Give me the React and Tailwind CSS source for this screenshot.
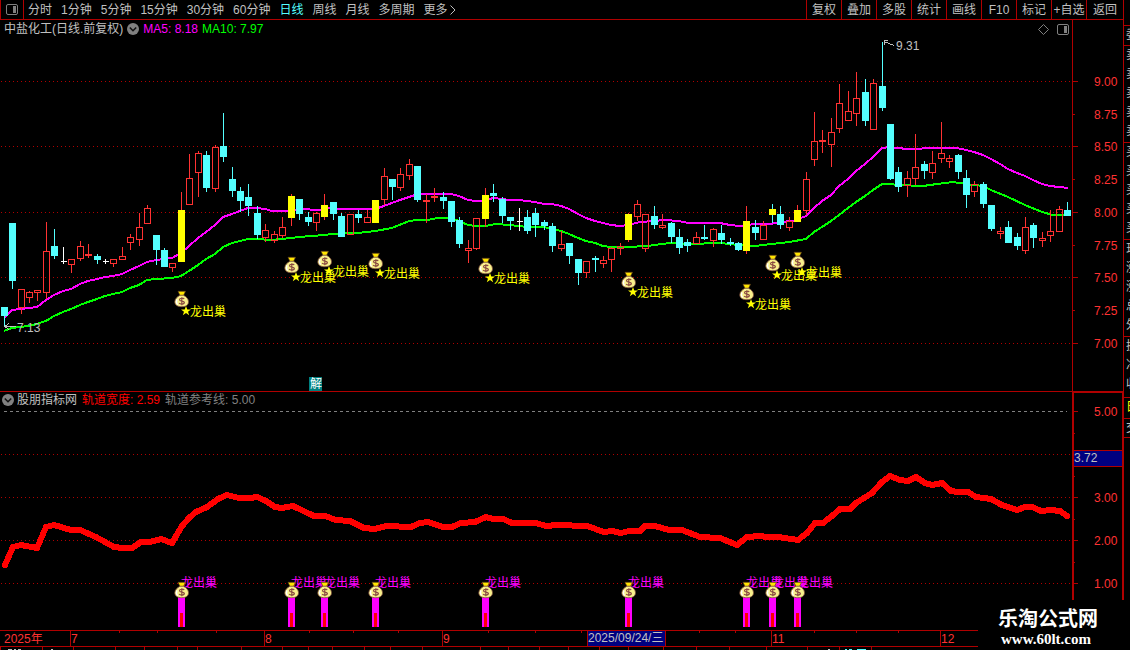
const periods = ['分时', '1分钟', '5分钟', '15分钟', '30分钟', '60分钟', '日线', '周线', '月线', '多周期'];
const tools = ['复权', '叠加', '多股', '统计', '画线', 'F10', '标记', '+自选', '返回'];

// kind, high, body top, body bottom, low
// u = up, d = down, y = signal bar, x = doji
const candles = [
  ['d', 307, 307, 316, 327], ['d', 223, 223, 281, 289], ['u', 289, 289, 308, 314], ['u', 291, 292, 298, 303],
  ['u', 290, 290, 293, 301], ['u', 222, 251, 293, 299], ['d', 229, 246, 256, 259], ['x', 247, 261, 262, 264],
  ['u', 259, 259, 265, 273], ['u', 241, 246, 259, 261], ['u', 244, 254, 256, 258], ['d', 254, 256, 260, 264],
  ['x', 259, 261, 262, 264], ['u', 259, 259, 264, 267], ['u', 247, 256, 260, 260], ['u', 234, 237, 243, 250],
  ['u', 213, 227, 240, 246], ['u', 205, 208, 224, 224], ['d', 235, 235, 250, 265], ['d', 248, 250, 267, 267],
  ['u', 263, 263, 268, 272], ['y', 192, 210, 262, 262], ['u', 154, 178, 205, 205], ['u', 151, 153, 173, 197],
  ['d', 151, 155, 188, 192], ['u', 145, 147, 189, 192], ['d', 113, 146, 157, 162], ['d', 167, 179, 191, 197],
  ['d', 187, 191, 201, 212], ['d', 184, 197, 206, 216], ['d', 206, 213, 235, 239], ['u', 224, 230, 238, 242],
  ['u', 231, 234, 241, 243], ['u', 217, 227, 236, 238], ['y', 194, 196, 218, 226], ['d', 199, 199, 214, 220],
  ['d', 212, 217, 222, 226], ['u', 212, 213, 223, 231], ['y', 194, 205, 217, 220], ['d', 202, 202, 214, 220],
  ['d', 213, 216, 237, 237], ['u', 214, 214, 235, 235], ['d', 210, 214, 218, 223], ['u', 210, 217, 223, 223],
  ['y', 200, 200, 223, 223], ['u', 168, 176, 200, 205], ['d', 179, 179, 187, 200], ['u', 168, 174, 188, 191],
  ['u', 159, 164, 176, 180], ['d', 166, 166, 200, 202], ['u', 194, 200, 202, 223], ['u', 188, 196, 198, 202],
  ['d', 192, 197, 201, 209], ['d', 201, 201, 222, 227], ['d', 217, 220, 244, 248], ['u', 240, 248, 251, 263],
  ['u', 218, 218, 249, 250], ['y', 188, 195, 219, 227], ['d', 184, 193, 196, 202], ['d', 197, 199, 216, 223],
  ['d', 217, 217, 221, 230], ['x', 208, 221, 222, 231], ['d', 210, 217, 231, 234], ['d', 208, 213, 225, 237],
  ['d', 220, 222, 226, 230], ['d', 223, 226, 246, 252], ['u', 231, 244, 249, 251], ['d', 243, 243, 256, 264],
  ['d', 259, 259, 273, 285], ['u', 261, 261, 273, 278], ['d', 256, 258, 260, 272], ['u', 256, 260, 264, 268],
  ['u', 247, 248, 260, 272], ['u', 243, 246, 249, 255], ['y', 213, 214, 240, 242], ['u', 200, 204, 217, 221],
  ['u', 214, 214, 249, 252], ['d', 206, 216, 225, 229], ['u', 214, 225, 228, 229], ['d', 222, 223, 237, 243],
  ['d', 229, 237, 248, 254], ['d', 239, 242, 246, 252], ['u', 232, 237, 244, 244], ['d', 225, 237, 239, 240],
  ['u', 228, 229, 241, 247], ['d', 225, 233, 240, 244], ['d', 238, 242, 244, 246], ['d', 242, 243, 250, 251],
  ['y', 206, 221, 251, 254], ['d', 220, 227, 233, 240], ['u', 221, 225, 240, 240], ['y', 204, 209, 215, 223],
  ['d', 206, 214, 225, 229], ['u', 217, 221, 228, 231], ['y', 205, 210, 222, 222], ['u', 172, 179, 211, 215],
  ['u', 112, 141, 160, 166], ['u', 130, 140, 142, 153], ['u', 118, 132, 145, 167], ['u', 84, 103, 129, 133],
  ['u', 91, 111, 121, 121], ['u', 72, 98, 114, 126], ['d', 79, 92, 121, 126], ['u', 79, 83, 130, 130],
  ['d', 42, 86, 108, 111], ['d', 124, 124, 179, 180], ['d', 167, 172, 187, 192], ['u', 171, 178, 186, 197],
  ['u', 134, 167, 179, 185], ['d', 161, 164, 171, 179], ['u', 151, 163, 173, 179], ['u', 122, 153, 159, 163],
  ['u', 155, 158, 162, 168], ['d', 154, 155, 172, 179], ['d', 170, 178, 195, 208], ['u', 181, 184, 192, 197],
  ['d', 182, 184, 204, 208], ['d', 205, 205, 229, 231], ['u', 227, 231, 234, 239], ['d', 221, 227, 243, 243],
  ['d', 233, 237, 246, 250], ['u', 217, 227, 251, 254], ['d', 223, 225, 238, 248], ['u', 232, 238, 241, 247],
  ['u', 210, 231, 236, 242], ['u', 206, 209, 232, 232], ['d', 202, 210, 216, 216],
];

const ma5 =
  '4,318 12,310 21,309 37,307 46,300 54,295 63,291 71,289 80,284 88,281 97,279 105,277 113,276 122,274 130,270 139,266 147,262 156,260 164,259 172,258 181,253 189,246 198,238 206,232 215,225 223,217 232,214 240,211 248,208 257,208 265,209 272,211 287,211 299,209 320,210 331,208 342,209 375,209 384,206 392,203 400,200 409,197 418,194 451,194 459,196 468,200 476,201 485,201 493,198 502,199 510,200 519,200 527,201 535,202 544,204 552,204 561,206 569,209 578,214 586,218 595,221 603,223 611,225 620,226 628,225 640,222 654,221 665,220 679,221 688,223 720,223 730,225 740,226 747,225 755,224 770,224 780,222 793,221 806,216 814,208 822,201 831,195 839,186 848,179 856,171 865,164 873,157 882,148 890,147 898,148 907,149 937,148 957,148 966,150 974,152 983,155 991,159 1000,164 1008,169 1017,173 1025,176 1033,180 1042,184 1050,186 1059,187 1068,188';
const ma10 =
  '4,331 12,328 21,327 33,325 46,321 54,316 63,312 71,309 80,305 88,302 97,299 105,296 113,294 122,292 130,288 139,285 147,280 156,279 172,278 181,276 189,271 198,265 206,259 215,254 223,247 232,243 240,241 248,239 257,239 270,240 282,239 299,237 324,235 333,234 358,233 375,231 392,228 409,221 417,220 428,220 437,218 451,218 459,221 468,225 476,226 485,226 496,224 510,225 527,227 544,227 552,229 561,231 569,234 578,238 586,241 595,243 603,246 611,247 628,247 647,246 670,243 688,244 720,243 738,245 755,246 763,245 789,242 806,239 814,232 822,227 831,221 839,215 848,208 856,202 865,196 873,190 882,184 890,184 898,185 923,186 937,184 953,182 966,184 983,186 991,190 1008,197 1025,205 1042,212 1053,215 1068,215';
const trackWidth =
  '5,565 13,547 21,545 37,548 46,527 54,525 71,530 80,530 96,537 114,547 123,548 132,548 141,542 150,542 161,539 172,543 182,526 189,518 196,512 207,507 218,499 227,495 239,498 250,498 257,497 266,501 275,507 282,508 293,506 314,516 325,516 336,520 350,521 364,528 375,529 386,526 411,527 420,523 428,522 443,527 452,527 461,523 475,522 486,517 493,519 503,519 512,523 536,523 546,526 557,525 587,526 604,532 612,531 621,533 629,531 640,531 645,526 655,526 669,530 682,530 700,537 720,538 737,545 747,537 760,536 767,537 778,537 798,540 807,533 815,523 823,523 832,516 840,509 850,509 856,503 872,493 882,482 890,476 900,480 908,481 916,477 925,483 932,485 942,483 951,491 958,492 968,492 976,497 991,499 1002,505 1017,510 1025,507 1032,507 1041,511 1051,510 1060,511 1067,516';

// candle index -> top of the money bag
const signals = [[21, 291], [34, 257], [38, 251], [44, 253], [57, 258], [74, 272], [88, 284], [91, 255], [94, 252]];

const priceTicks = [['9.00', 81], ['8.75', 114], ['8.50', 146], ['8.25', 179], ['8.00', 212], ['7.75', 245], ['7.50', 277], ['7.25', 310], ['7.00', 343]];
const widthTicks = [['5.00', 411], ['3.00', 497], ['2.00', 540], ['1.00', 583]];
const months = [['7', 70], ['8', 264], ['9', 442], ['11', 771], ['12', 940]];
const weekTicks = [119, 157, 216, 309, 353, 398, 488, 535, 581, 699, 735, 814, 856, 898];
const tabTicks = [0, 42, 73, 115, 144, 177, 197, 241, 282, 308, 332, 364, 390, 422, 480, 508, 539, 568, 599, 628, 663, 696, 729, 766, 807, 839, 871];

const colors = { u: '#ff3232', d: '#54ffff', y: '#ffff00', x: '#ffffff' };
const candleX = (i) => Math.floor(4.17 + i * 8.441);

function Candle({ index, data }) {
  const [kind, high, top, bottom, low] = data;
  const x = candleX(index);
  const color = colors[kind];
  const wick = kind === 'y' ? (index === 91 ? colors.d : colors.u) : color;
  return (
    <g>
      {top > high && <rect x={x} y={high} width="1" height={top - high} fill={wick} />}
      {low > bottom && <rect x={x} y={bottom} width="1" height={low - bottom} fill={wick} />}
      {kind === 'u' && bottom - top > 2 ? (
        <rect x={x - 2.5} y={top + 0.5} width="6" height={bottom - top - 1} fill="none" stroke={color} />
      ) : (
        <rect x={kind === 'x' ? x - 2 : x - 3} y={top} width={kind === 'x' ? 6 : 7} height={bottom - top} fill={color} />
      )}
    </g>
  );
}

function MoneyBag({ x, y }) {
  return (
    <g transform={`translate(${x - 6} ${y})`}>
      <path d="M3 0.300h7.500l-2 4.200h-3.500z" fill="#ffe600" stroke="#5a3a1a" strokeWidth="0.700" />
      <path d="M5 4.200h3.400c3 1.600 5.100 3.600 5.100 6.500 0 3.400-2.600 5-6.800 5S-0.200 14.100-0.200 10.700C-0.200 7.800 2.200 5.800 5 4.200z" fill="#f8f08c" stroke="#7a4a3a" strokeWidth="0.800" />
      <path d="M2.200 8.300c-1.200 2.200-.8 4 .6 5.200" fill="none" stroke="#fff" strokeWidth="1.400" />
      <path d="M9.200 8C8.600 7 4.500 6.700 4.500 8.700S9.400 9.600 9.400 11.600 5 13.300 4.100 12.200M6.800 6.200v8" fill="none" stroke="#8a4a42" strokeWidth="1.200" />
    </g>
  );
}

function GridLine({ y }) {
  return <line x1="1" x2="1072" y1={y + 0.5} y2={y + 0.5} stroke="#b00000" strokeDasharray="1 3" shapeRendering="crispEdges" />;
}

function Collapse({ label }) {
  return (
    <button aria-label={label} className="block h-3 w-3">
      <svg viewBox="0 0 12 12" className="block h-3 w-3">
        <circle cx="6" cy="6" r="6" fill="#808080" />
        <path d="M2.800 4.500L6 7.700l3.200-3.200" fill="none" stroke="#111" strokeWidth="1.600" />
      </svg>
    </button>
  );
}

function PanelIcon() {
  return (
    <svg viewBox="0 0 12 11" className="block h-[11px] w-3">
      <rect x="0.5" y="0.5" width="11" height="10" rx="1.500" fill="none" stroke="#808080" />
      <rect x="7" y="2" width="3" height="7" fill="#808080" />
    </svg>
  );
}

function Toolbar() {
  return (
    <nav className="flex h-5 items-stretch justify-between border-b border-l border-[#b00000]">
      <div className="flex">
        <button aria-label="侧栏" className="flex w-[23px] items-center justify-center border-r border-[#b00000]">
          <PanelIcon />
        </button>
        <div className="flex items-center gap-[9px] pl-1">
          {periods.map((p) => (
            <button key={p} className={p === '日线' ? 'text-[#54ffff]' : ''}>
              {p}
            </button>
          ))}
          <button className="flex items-center">
            更多
            <svg viewBox="0 0 8 10" className="h-[10px] w-2">
              <path d="M2.500 0.500L7 5L2.500 9.500" fill="none" stroke="#c0c0c0" />
            </svg>
          </button>
        </div>
      </div>
      <div className="flex">
        {tools.map((t) => (
          <button key={t} className="w-[35px] border-l border-[#b00000] whitespace-nowrap last:w-[37px]">
            {t}
          </button>
        ))}
      </div>
    </nav>
  );
}

function PriceChart() {
  return (
    <section>
      <header className="flex h-[18px]">
        <div className="flex flex-1 items-center gap-1 pl-1">
          <h1>中盐化工(日线.前复权)</h1>
          <Collapse label="主图指标" />
          <span className="text-[#ff00ff]">MA5: 8.18</span>
          <span className="text-[#00ff00]">MA10: 7.97</span>
        </div>
        <div className="flex items-center gap-2 pr-[3px]">
          <svg viewBox="0 0 11 11" className="h-[11px] w-[11px]">
            <path d="M5.500 0.500L10.500 5.500L5.500 10.500L0.500 5.500z" fill="none" stroke="#808080" />
          </svg>
          <PanelIcon />
        </div>
        <div className="w-[51px] border-l border-[#b00000]" />
      </header>
      <svg viewBox="0 38 1123 354" className="block h-auto w-full text-xs">
        {priceTicks.filter((_, i) => i % 2 === 0).map(([label, y]) => (
          <GridLine key={label} y={y} />
        ))}
        <g fill="none" strokeWidth="2" shapeRendering="crispEdges">
          <polyline points={ma5} stroke="#ff00ff" />
          <polyline points={ma10} stroke="#00ff00" />
        </g>
        <g shapeRendering="crispEdges">
          {candles.map((c, i) => (
            <Candle key={i} index={i} data={c} />
          ))}
        </g>

        {signals.map(([i, y]) => (
          <g key={i} fill="#ffff00">
            <MoneyBag x={candleX(i)} y={y} />
            <path
              transform={`translate(${candleX(i) + 5} ${y + 20})`}
              d="M0-5L1.300-1.600L5-1.600L2 0.700L3.200 4.300L0 2.100L-3.200 4.300L-2 0.700L-5-1.600L-1.300-1.600z"
            />
            <text x={candleX(i) + 9} y={y + 25}>龙出巢</text>
          </g>
        ))}

        <g fill="none" stroke="#c0c0c0" shapeRendering="crispEdges">
          <path d="M5 326.500h11M9 323.500l-4 3l4 3" />
          <path d="M884 41.500l10 4M888 40.500h-4v4" />
        </g>
        <g fill="#c0c0c0">
          <text x="17" y="332">7.13</text>
          <text x="896" y="50">9.31</text>
        </g>

        <rect x="309" y="377" width="13" height="14" fill="#008080" />
        <text x="310" y="388" fill="#ffffff">解</text>

        <g fill="#b00000">
          <rect x="1072" y="38" width="1" height="354" />
          <rect x="0" y="391" width="1123" height="1" />
          {priceTicks.map(([label, y], i) => (
            <rect key={label} x="1073" y={y} width={i % 2 === 0 ? 5 : 2} height="1" />
          ))}
        </g>
        <g fill="#ff3232">
          {priceTicks.map(([label, y]) => (
            <text key={label} x="1094" y={y + 5}>{label}</text>
          ))}
        </g>
      </svg>
    </section>
  );
}

function IndicatorChart() {
  return (
    <section>
      <header className="flex h-4">
        <div className="flex flex-1 items-center gap-[5px] pl-[2px]">
          <div className="flex items-center gap-[3px]">
            <Collapse label="副图指标" />
            <h2>股朋指标网</h2>
          </div>
          <span className="text-[#ff0000]">轨道宽度: 2.59</span>
          <span className="text-[#808080]">轨道参考线: 5.00</span>
        </div>
        <div className="w-[51px] border-t border-r border-l-2 border-[#b00000]" />
      </header>
      {/* the top tick label reaches up into the header row */}
      <svg viewBox="0 408 1123 222" className="block h-auto w-full overflow-visible text-xs">
        {[454, 497, 540, 583].map((y) => (
          <GridLine key={y} y={y} />
        ))}
        <line x1="4" x2="1067" y1="411.5" y2="411.5" stroke="#808080" strokeDasharray="3 3" shapeRendering="crispEdges" />
        <polyline points={trackWidth} fill="none" stroke="#ff0000" strokeWidth="6" strokeLinejoin="round" strokeLinecap="round" shapeRendering="crispEdges" />

        {signals.map(([i]) => (
          <g key={i}>
            <rect x={candleX(i) - 3} y="597" width="7" height="30" fill="#ff00ff" />
            <rect x={candleX(i) - 1} y="613" width="3" height="14" fill="#ff0000" />
            <text x={candleX(i)} y="587" fill="#ff00ff">龙出巢</text>
            <MoneyBag x={candleX(i)} y={582} />
          </g>
        ))}

        <g fill="#b00000">
          <rect x="1072" y="408" width="2" height="222" />
          <rect x="1122" y="408" width="1" height="222" />
          {widthTicks.map(([label, y]) => (
            <rect key={label} x="1074" y={y} width="4" height="1" />
          ))}
          {[433, 476, 519, 562].map((y) => (
            <rect key={y} x="1074" y={y} width="1" height="1" />
          ))}
          <rect x="1074" y="450" width="48" height="17" />
        </g>
        <rect x="1074" y="451" width="48" height="15" fill="#000080" />
        <text x="1074" y="462" fill="#c0c0c0">3.72</text>
        <g fill="#ff3232">
          {widthTicks.map(([label, y]) => (
            <text key={label} x="1094" y={y + 5}>{label}</text>
          ))}
        </g>
      </svg>
    </section>
  );
}

function TimeAxis() {
  return (
    <svg viewBox="0 630 1123 20" className="block h-auto w-full text-xs">
      <g fill="#b00000">
        <rect x="0" y="630" width="1123" height="1" />
        <rect x="0" y="646" width="1123" height="1" />
        {months.map(([label, x]) => (
          <rect key={label} x={x} y="631" width="1" height="15" />
        ))}
        {weekTicks.map((x) => (
          <rect key={x} x={x} y="631" width="1" height="2" />
        ))}
        {tabTicks.map((x) => (
          <rect key={x} x={x} y="647" width="1" height="3" />
        ))}
        <rect x="587" y="631" width="79" height="15" />
      </g>
      <g fill="#ff3232">
        <text x="4" y="643">2025年</text>
        {months.map(([label, x]) => (
          <text key={label} x={x + 1} y="643">{label}</text>
        ))}
      </g>
      <rect x="588" y="631" width="77" height="15" fill="#000080" />
      <text x="588" y="642" fill="#c0c0c0">2025/09/24/三</text>
      <path d="M8 649.500h4M14 649.500h2M18 649.500h3M51 649.500h2M828 649.500h2" stroke="#c0c0c0" />
      <path d="M845 649.500h2M849 649.500h3M857 649.500h9" stroke="#54ffff" />
    </svg>
  );
}

function QuoteStrip() {
  return (
    <aside className="w-[7px] shrink-0 overflow-hidden border-l border-[#b00000] pt-[25px] leading-[19px] whitespace-nowrap">
      <p className="h-5 border-t border-[#b00000] pl-[2px]">委比</p>
      {['卖', '买'].map((side) => (
        <ul key={side} className="h-[97px] border-t border-[#b00000] pl-[2px]">
          {['一', '二', '三', '四', '五'].map((n) => (
            <li key={n}>{side}{n}</li>
          ))}
        </ul>
      ))}
      <ul className="h-[97px] border-t border-[#b00000] pl-[2px]">
        {['现价', '涨跌', '涨幅', '总量', '外盘'].map((n) => (
          <li key={n}>{n}</li>
        ))}
      </ul>
      <ul className="h-[61px] border-t border-[#b00000] pl-[2px]">
        {['换手', '净资', '收益'].map((n) => (
          <li key={n}>{n}</li>
        ))}
      </ul>
      <p className="h-[21px] border-t border-[#b00000] pl-[2px] text-[#ffff00]">日</p>
      <p className="h-5 border-y border-[#b00000] pl-[2px]">交易</p>
    </aside>
  );
}

export default function App() {
  return (
    <div className="relative flex min-h-screen w-full overflow-hidden bg-black font-['Liberation_Sans','Noto_Sans_CJK_SC',sans-serif] text-xs text-[#c0c0c0]">
      <main className="min-w-0 flex-1">
        <Toolbar />
        <PriceChart />
        <IndicatorChart />
        <TimeAxis />
      </main>
      <QuoteStrip />

      {/* site mark over the bottom corner */}
      <div className="absolute right-0 bottom-0 flex h-[50px] w-[152px] flex-col bg-black pt-2 pl-5 text-white">
        <span className="text-[20px] leading-[22px] font-bold">乐淘公式网</span>
        <a href="#" className="pl-[3px] font-['Liberation_Serif',serif] text-[15px] leading-[18px] font-bold">www.60lt.com</a>
      </div>
    </div>
  );
}
